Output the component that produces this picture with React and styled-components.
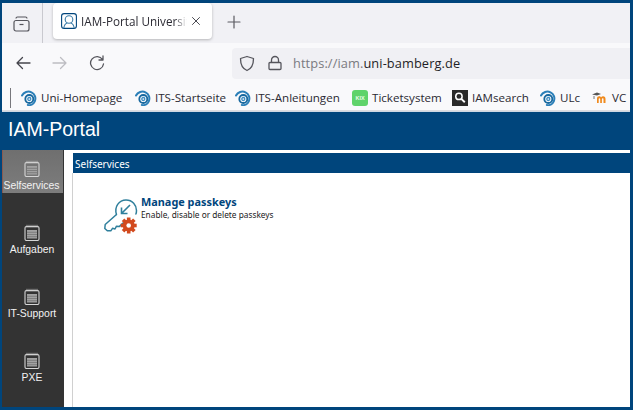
import React from 'react';
import styled, { createGlobalStyle } from 'styled-components';

const Global = createGlobalStyle`
  html, body { margin: 0; padding: 0; background: #00457c; overflow: hidden; }
  #root { width: 633px; height: 410px; }
  * { box-sizing: border-box; }
`;
const Frame = styled.div`
  width: 633px; height: 410px; padding: 3px 3px 3px 2px;
  display: flex; flex-direction: column; background: #00457c;
`;
const Browser = styled.div`
  height: 108px; background: #f9f9fb; display: flex; flex-direction: column; flex: none;
  font-family: "Open Sans", "Noto Sans", sans-serif; color: #2b2a33;
`;
const TabStrip = styled.div`
  height: 40px; background: #f1f1f5; display: flex; align-items: flex-start; flex: none;
`;
const TabSlot = styled.div`
  width: 41px; height: 40px; border-right: 1px solid #c9c9cf;
  display: flex; align-items: center; justify-content: center;
  svg { margin-right: 1px; margin-top: 1px; }
`;
const Tab = styled.div`
  width: 159px; height: 36px; margin-left: 10px; background: #fff; border-radius: 4px;
  box-shadow: 0 1px 3px rgba(0,0,0,.25); display: flex; align-items: center; padding: 0 8px; gap: 4px;
`;
const TabTitle = styled.span`
  font-size: 11.7px; width: 106px; white-space: nowrap; overflow: hidden;
  -webkit-mask-image: linear-gradient(90deg, #000 88%, transparent);
  mask-image: linear-gradient(90deg, #000 88%, transparent);
`;
const NewTab = styled.div`
  margin: 11px 0 0 14px; height: 16px; display: flex;
`;
const Toolbar = styled.div`
  height: 37px; display: flex; align-items: center; flex: none; padding: 3px 0 0 13px;
`;
const NavBtns = styled.div`
  display: flex; align-items: center; gap: 21px; width: 217px;
`;
const AddressBar = styled.div`
  width: 398px; height: 31px; background: #f0f0f4; border-radius: 4px 0 0 4px;
  display: flex; align-items: center; padding-left: 7px; gap: 13px;
`;
const Url = styled.span`
  font-size: 12.8px; color: #7a7a80; letter-spacing: .1px; margin-left: -2px;
  b { font-weight: 400; color: #1f1e26; }
`;
const Bookmarks = styled.div`
  height: 31px; display: flex; align-items: center; padding: 5px 0 0 8px; border-bottom: 1px solid #dcdce0; flex: none;
`;
const Divider = styled.div`
  width: 1px; height: 20px; background: #77777c; margin-right: 10px; flex: none;
`;
const Bookmark = styled.div`
  display: flex; align-items: center; gap: 4px; font-size: 11.6px; white-space: nowrap; width: ${p => p.$w}px; flex: none; color: #2b2a33;
`;
const KixBadge = styled.span`
  width: 16px; height: 16px; border-radius: 3px; background: #5fd36a; color: #eafbe9; flex: none;
  font: 700 5.5px "Liberation Sans", Arial, sans-serif; display: flex; align-items: center; justify-content: center;
`;
const Header = styled.div`
  height: 39px; flex: none; color: #fff; font: 19.5px "Liberation Sans", Arial, sans-serif;
  display: flex; align-items: center; padding: 0 0 3px 6px; background: #00457c; border-top: 1px solid #cfd8e3;
`;
const Body = styled.div`
  flex: 1; display: flex; min-height: 0; background: #fff;
`;
const Sidebar = styled.div`
  width: 62px; background: #333; display: flex; flex-direction: column; gap: 21px; flex: none;
`;
const NavItem = styled.div`
  height: 43px; display: flex; flex-direction: column; align-items: center; padding: 10px 2px 0 0;
  font: 10.4px "Liberation Sans", Arial, sans-serif; color: #f2f2f2;
  background: ${p => p.$active ? 'linear-gradient(#6f6f6f, #7d7d7d)' : 'transparent'};
  box-shadow: ${p => p.$active ? 'inset 1px 0 0 #8a5a50' : 'none'};
  width: ${p => p.$active ? '61px' : '100%'};
  span { margin-top: 3px; line-height: 12px; white-space: nowrap; }
`;
const Main = styled.div`
  flex: 1; padding: 3px 0 0 9px; display: flex; flex-direction: column;
`;
const PanelHead = styled.div`
  height: 20px; flex: none; background: #00457c; color: #fff;
  font: 10px "Noto Sans", "Open Sans", sans-serif; display: flex; align-items: center; padding: 1px 0 0 2px;
`;
const PanelBody = styled.div`
  flex: 1; border-left: 1px solid #d0d0d0; padding: 22px 0 0 31px; margin-left: -1px;
`;
const Action = styled.div`
  display: flex; align-items: flex-start;
  svg { margin: 4px 0 0 0; }
`;
const ActionText = styled.div`
  font-family: "Noto Sans", "Open Sans", sans-serif; padding-top: 0;
`;
const ActionTitle = styled.div`
  font-size: 10.9px; font-weight: 700; color: #00457c; line-height: 13px; white-space: nowrap;
`;
const ActionSub = styled.div`
  font-size: 8.3px; color: #222; line-height: 10px; white-space: nowrap; margin-top: 2px;
`;

const Archive = () => (
  <svg width="17" height="16" viewBox="0 0 17 16" fill="none" stroke="#55555c" strokeWidth="1.2">
    <rect x="1" y="4.5" width="15" height="10.5" rx="2" />
    <path d="M3 2.5c0-1 .6-1.5 1.5-1.5h8c.9 0 1.5.5 1.5 1.5" />
    <path d="M6.5 8.5h4" />
  </svg>
);
const TabIcon = () => (
  <svg width="16" height="16" viewBox="0 0 16 16" fill="none" style={{ flex: 'none' }}>
    <rect x=".6" y=".6" width="14.8" height="14.8" rx="2.5" stroke="#00457c" strokeWidth="1.1" />
    <circle cx="8" cy="6.5" r="3.8" stroke="#3a7ca8" strokeWidth="1.1" />
    <path d="M2.8 15c.5-3 2-4.6 3.4-5M13.2 15c-.5-3-2-4.6-3.4-5" stroke="#3a7ca8" strokeWidth="1.1" />
  </svg>
);
const Stroke = ({ w = 16, h = 16, c = '#4a4a52', sw = 1.3, d }) => (
  <svg width={w} height={h} viewBox={`0 0 ${w} ${h}`} fill="none" stroke={c} strokeWidth={sw} strokeLinecap="round" strokeLinejoin="round" style={{ flex: 'none' }}>
    <path d={d} />
  </svg>
);
const Rings = () => (
  <svg width="16" height="16" viewBox="0 0 16 16" fill="none" style={{ flex: 'none' }}>
    <path d="M1 5.500C2.800 2 7 .6 10.500 2.300c3.400 1.700 4.700 5.700 3.300 9-1.300 3-4.500 4.300-7 3.700" stroke="#2b7fb8" strokeWidth="2" strokeLinecap="round" />
    <circle cx="8.300" cy="9" r="4" stroke="#17689f" strokeWidth="1.800" />
    <circle cx="8.300" cy="9" r="1.500" stroke="#3c8dc2" strokeWidth="1.300" />
  </svg>
);
const Kix = () => <KixBadge>KIX</KixBadge>;
const Search = () => (
  <svg width="16" height="16" viewBox="0 0 15 15" style={{ flex: 'none' }}>
    <rect width="15" height="15" fill="#2a2a2a" />
    <circle cx="6.500" cy="6" r="3" fill="none" stroke="#fff" strokeWidth="1.400" />
    <path d="M8.700 8.300 12 11.500" stroke="#fff" strokeWidth="1.800" />
  </svg>
);
const Moodle = () => (
  <svg width="16" height="14" viewBox="0 0 16 14" style={{ flex: 'none' }}>
    <path d="M0 3.500 5 1.500l4 1.500-4 1.500z" fill="#555" />
    <path d="M2 5v3" stroke="#777" strokeWidth="1" />
    <path d="M5 12V7.500c0-1.500 1-2.200 2.200-2.200 1 0 1.500.5 1.900 1 .4-.6 1.100-1 2-1 1.500 0 2.400 1 2.400 2.500V12h-2V8.300c0-.7-.2-1-.8-1-.5 0-.8.3-.8 1V12H8.200V8.300c0-.7-.2-1-.7-1-.5 0-.8.3-.8 1V12z" fill="#f08a1d" />
  </svg>
);
const Sheet = () => (
  <svg width="16" height="17" viewBox="0 0 16 17" fill="none" style={{ flex: 'none' }}>
    <rect x="1" y="2.500" width="14" height="14" rx="1.500" stroke="#d6d6d6" strokeWidth="1.100" />
    <path d="M3 .8v3M5 .8v3M7 .8v3M9 .8v3M11 .8v3M13 .8v3" stroke="#c8c8c8" strokeWidth=".8" />
    <rect x="3" y="6" width="10" height="8.500" fill="#a2a2a2" />
    <path d="M3 8.300h10M3 10.500h10M3 12.700h10" stroke="#6e6e6e" strokeWidth=".7" />
  </svg>
);
const KeyIcon = () => (
  <svg width="37" height="35" viewBox="0 0 37 35" fill="none" style={{ flex: 'none' }}>
    <path d="M12.500 15.500 1.200 25.500l-.4 4 2.500 2.300h3.500l1.700-2.500 2.500.7 1.500-2.800 3 .2 3.500-3.300c1 .2 1.500.2 2.500.1" stroke="#2f7f9c" strokeWidth="1.500" strokeLinejoin="round" />
    <path d="M12.500 15.500C10 8 15 1 22 1c6.500 0 10.500 5 10.500 10.500 0 1.200-.2 2.500-.6 3.500" stroke="#2f7f9c" strokeWidth="1.500" strokeLinecap="round" />
    <path d="M26 6 17.500 14.500M17.500 8.500v6h6" stroke="#2f7f9c" strokeWidth="1.600" />
    <g transform="translate(24.700 26.500)">
      {[0, 45, 90, 135].map(a => <rect key={a} x="-1.800" y="-8" width="3.600" height="16" fill="#d24a1e" transform={`rotate(${a})`} />)}
      <circle r="6" fill="#d24a1e" />
      <circle r="2.300" fill="#fff" />
    </g>
  </svg>
);

const nav = ['Selfservices', 'Aufgaben', 'IT-Support', 'PXE'];
const marks = [
  ['Uni-Homepage', Rings, 114], ['ITS-Startseite', Rings, 100], ['ITS-Anleitungen', Rings, 117],
  ['Ticketsystem', Kix, 100], ['IAMsearch', Search, 88], ['ULc', Rings, 52], ['VC', Moodle, 38],
];

export default function App() {
  return (
    <Frame>
      <Global />
      <Browser>
        <TabStrip>
          <TabSlot><Archive /></TabSlot>
          <Tab>
            <TabIcon />
            <TabTitle>IAM-Portal Universität Bamberg</TabTitle>
            <Stroke w={10} h={10} c="#4a4a52" sw={1} d="M1.500 1.500l7 7M8.500 1.500l-7 7" />
          </Tab>
          <NewTab><Stroke w={16} h={16} c="#5b5b62" sw={1.200} d="M8 2v12M2 8h12" /></NewTab>
        </TabStrip>
        <Toolbar>
          <NavBtns>
            <Stroke w={16} h={16} c="#45454c" d="M15 8H2M7.500 2.500 2 8l5.500 5.500" />
            <Stroke w={16} h={16} c="#bdbdc2" d="M1 8h13M8.500 2.500 14 8l-5.500 5.500" />
            <Stroke w={16} h={16} c="#55555c" d="M13.500 4.500A6.500 6.500 0 1 0 14.500 9M14 1v4h-4" />
          </NavBtns>
          <AddressBar>
            <Stroke w={16} h={17} c="#55555c" d="M8 1.500 1.500 3.500c0 6 1.500 10 6.500 12 5-2 6.500-6 6.500-12z" />
            <Stroke w={14} h={16} c="#55555c" d="M2 7.500h10a1 1 0 0 1 1 1v5a1 1 0 0 1-1 1H2a1 1 0 0 1-1-1v-5a1 1 0 0 1 1-1zM3.500 7.500V5a3.500 3.500 0 0 1 7 0v2.500" />
            <Url>https://iam.<b>uni-bamberg.de</b></Url>
          </AddressBar>
        </Toolbar>
        <Bookmarks>
          <Divider />
          {marks.map(([t, I, w]) => <Bookmark key={t} $w={w}><I />{t}</Bookmark>)}
        </Bookmarks>
      </Browser>
      <Header>IAM-Portal</Header>
      <Body>
        <Sidebar>
          {nav.map((n, i) => <NavItem key={n} $active={i === 0}><Sheet /><span>{n}</span></NavItem>)}
        </Sidebar>
        <Main>
          <PanelHead>Selfservices</PanelHead>
          <PanelBody>
            <Action>
              <KeyIcon />
              <ActionText>
                <ActionTitle>Manage passkeys</ActionTitle>
                <ActionSub>Enable, disable or delete passkeys</ActionSub>
              </ActionText>
            </Action>
          </PanelBody>
        </Main>
      </Body>
    </Frame>
  );
}
